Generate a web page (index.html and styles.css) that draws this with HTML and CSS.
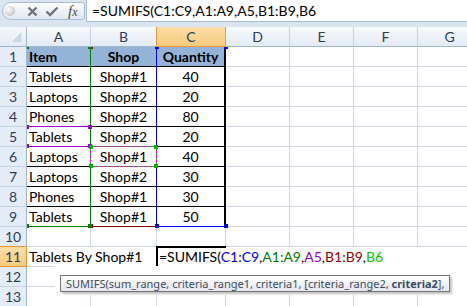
FILE: index.html
```html
<!DOCTYPE html>
<html lang="en">

<head>
    <meta charset="UTF-8">
    <title>SUMIFS</title>
    <link rel="stylesheet" href="styles.css">
</head>

<body>
    <div class="formulaBar">
        <div class="fxBox">
            <span class="knob"></span>
            <svg class="btnX" width="11" height="11" viewBox="0 0 11 11"><path d="M1.5 1.5L9.5 9.5M9.5 1.5L1.5 9.5"/></svg>
            <svg class="btnOk" width="14" height="11" viewBox="0 0 14 11"><path d="M1.5 5.5L5 9L12.5 1.5"/></svg>
            <span class="fx">f<i>x</i></span>
        </div>
        <div class="formulaInput">=SUMIFS(C1:C9,A1:A9,A5,B1:B9,B6</div>
    </div>
    <div class="band"></div>
    <div class="sheet">
        <div class="grid">
            <div class="corner"><svg width="26" height="19" viewBox="0 0 26 19"><polygon points="22,4 22,16 10,16"/></svg></div>
            <div class="ch">A</div><div class="ch pre">B</div><div class="ch sel">C</div><div class="ch">D</div><div class="ch">E</div><div class="ch">F</div><div class="ch">G</div>

            <div class="rh">1</div><div class="c t hd">Item</div><div class="c t hd m">Shop</div><div class="c t hd m q">Quantity</div><div class="c"></div><div class="c"></div><div class="c"></div><div class="c"></div>
            <div class="rh">2</div><div class="c t">Tablets</div><div class="c t m">Shop#1</div><div class="c t m q">40</div><div class="c"></div><div class="c"></div><div class="c"></div><div class="c"></div>
            <div class="rh">3</div><div class="c t">Laptops</div><div class="c t m">Shop#2</div><div class="c t m q">20</div><div class="c"></div><div class="c"></div><div class="c"></div><div class="c"></div>
            <div class="rh">4</div><div class="c t">Phones</div><div class="c t m">Shop#2</div><div class="c t m q">80</div><div class="c"></div><div class="c"></div><div class="c"></div><div class="c"></div>
            <div class="rh">5</div><div class="c t">Tablets</div><div class="c t m">Shop#2</div><div class="c t m q">20</div><div class="c"></div><div class="c"></div><div class="c"></div><div class="c"></div>
            <div class="rh">6</div><div class="c t">Laptops</div><div class="c t m">Shop#1</div><div class="c t m q">40</div><div class="c"></div><div class="c"></div><div class="c"></div><div class="c"></div>
            <div class="rh">7</div><div class="c t">Laptops</div><div class="c t m">Shop#2</div><div class="c t m q">30</div><div class="c"></div><div class="c"></div><div class="c"></div><div class="c"></div>
            <div class="rh">8</div><div class="c t">Phones</div><div class="c t m">Shop#1</div><div class="c t m q">30</div><div class="c"></div><div class="c"></div><div class="c"></div><div class="c"></div>
            <div class="rh">9</div><div class="c t">Tablets</div><div class="c t m">Shop#1</div><div class="c t m q">50</div><div class="c"></div><div class="c"></div><div class="c"></div><div class="c"></div>
            <div class="rh pre">10</div><div class="c"></div><div class="c"></div><div class="c"></div><div class="c"></div><div class="c"></div><div class="c"></div><div class="c"></div>
            <div class="rh sel">11</div><div class="c ov">Tablets By Shop#1</div><div class="c"></div><div class="c"></div><div class="c"></div><div class="c"></div><div class="c"></div><div class="c"></div>
            <div class="rh">12</div><div class="c"></div><div class="c"></div><div class="c"></div><div class="c"></div><div class="c"></div><div class="c"></div><div class="c"></div>
            <div class="rh">13</div><div class="c"></div><div class="c"></div><div class="c"></div><div class="c"></div><div class="c"></div><div class="c"></div><div class="c"></div>
        </div>

        <!-- range outlines, in-cell editor and tooltip drawn over the grid -->
        <div class="marks">
            <div class="rng rngB"><i class="tl"></i><i class="tr"></i><i class="bl"></i><i class="br"></i></div>
            <div class="rng rngA"><i class="tl"></i><i class="tr"></i><i class="bl"></i><i class="br"></i></div>
            <div class="rng rngC"><i class="tl"></i><i class="tr"></i><i class="bl"></i><i class="br"></i></div>
            <div class="rng rngA5"><i class="tl"></i><i class="tr"></i><i class="bl"></i><i class="br"></i></div>
            <div class="rng rngB6"><i class="tl"></i><i class="tr"></i><i class="bl"></i><i class="br"></i></div>
            <div class="editor"><span class="activeFrame"></span>=SUMIFS(<span class="refC">C1:C9</span>,<span class="refA">A1:A9</span>,<span class="refA5">A5</span>,<span class="refB">B1:B9</span>,<span class="refB6">B6</span></div>
            <div class="tipClear"></div>
            <div class="tip">SUMIFS(sum_range, criteria_range1, criteria1, [criteria_range2, <b>criteria2</b>], </div>
        </div>
    </div>
</body>

</html>
```

FILE: styles.css
```css
* {
    margin: 0;
    padding: 0;
    box-sizing: border-box;
}

body {
    width: 467px;
    height: 306px;
    overflow: hidden;
    background: #fff;
    font-family: Lato, "Liberation Sans", sans-serif;
    font-size: 14px;
    color: #000;
}

/* formula bar */
.formulaBar {
    display: flex;
    height: 22px;
    background: #dbe5f1;
}

.fxBox {
    display: flex;
    align-items: center;
    width: 83px;
    height: 18px;
    margin: 2px 0 0 2px;
    border: 1px solid #a7bcd6;
    border-radius: 9px 3px 3px 9px;
    background: linear-gradient(#fbfcfe, #e1e8f2);
}

.knob {
    width: 10px;
    height: 10px;
    margin-left: 2px;
    border-radius: 50%;
    background: radial-gradient(circle at 35% 35%, #fff, #cfcfcf 60%, #a9a9a9);
}

.btnX {
    margin-left: 12px;
}

.btnX path,
.btnOk path {
    fill: none;
    stroke: #707070;
    stroke-width: 2.3;
}

.btnOk {
    margin-left: 7px;
}

.fx {
    margin-left: 9px;
    font-family: "Liberation Serif", serif;
    font-style: italic;
    font-size: 15px;
    color: #4a4a4a;
}

.fx i {
    font-size: 12px;
}

.formulaInput {
    flex: 1;
    margin-left: 1px;
    padding-left: 5px;
    background: #fff;
    border-left: 1px solid #a7bcd6;
    border-bottom: 1px solid #a7bcd6;
    line-height: 21px;
    white-space: nowrap;
}

.band {
    height: 5px;
    background: #dbe5f1;
}

/* sheet */
.sheet {
    position: relative;
    height: 279px;
    overflow: hidden;
}

.grid {
    display: grid;
    grid-template-columns: 27px 64px 66px 69px 64px 64px 64px 64px;
    grid-auto-rows: 20px;
}

.corner {
    background: linear-gradient(#f6f8fb, #e2e9f3);
    border-right: 1px solid #9eb6ce;
    border-bottom: 1px solid #9eb6ce;
}

.corner polygon {
    fill: #cdd8e7;
    stroke: #f4f7fb;
    stroke-width: 1;
}

.ch {
    background: linear-gradient(#f7f9fc, #e3eaf4);
    border-right: 1px solid #c5d3e4;
    border-bottom: 1px solid #9eb6ce;
    text-align: center;
    line-height: 19px;
    color: #2b3f58;
}

.ch.pre {
    border-right-color: #f29536;
}

.ch.sel {
    background: linear-gradient(#fbdea6, #f6cb80);
    border-right-color: #f29536;
    border-bottom-color: #f29536;
}

.rh {
    background: #e4ecf7;
    border-right: 1px solid #9eb6ce;
    border-bottom: 1px solid #c5d3e4;
    text-align: center;
    line-height: 19px;
    color: #2b3f58;
}

.rh.pre {
    border-bottom-color: #f29536;
}

.rh.sel {
    background: linear-gradient(#fbdea6, #f6cb80);
    border-right-color: #f29536;
    border-bottom-color: #f29536;
}

.c {
    padding: 0 2px;
    border-right: 1px solid #d0d7e5;
    border-bottom: 1px solid #d0d7e5;
    line-height: 19px;
    white-space: nowrap;
}

.c.t {
    border-right-color: #000;
    border-bottom-color: #000;
}

.c.q {
    border-right: 2px solid #000;
}

.c.hd {
    background: #95b3d7;
    font-weight: bold;
}

.c.m {
    text-align: center;
}

.c.ov {
    border-right-color: transparent;
}

/* overlay layer, origin at top-left of A1 */
.marks {
    position: absolute;
    left: 27px;
    top: 20px;
    right: 0;
    bottom: 0;
    overflow: hidden;
}

.rng {
    position: absolute;
}

.rng i {
    position: absolute;
    width: 4px;
    height: 4px;
    background: currentColor;
}

.tl { left: -2px; top: -2px; }
.tr { right: -2px; top: -2px; }
.bl { left: -2px; bottom: -2px; }
.br { right: -2px; bottom: -2px; }

.rngB {
    left: 64px;
    top: 0;
    width: 66px;
    height: 180px;
    border-bottom: 1px solid;
    color: #800000;
}

.rngA {
    left: 0;
    top: 0;
    width: 64px;
    height: 180px;
    border-right: 1px solid;
    border-bottom: 1px solid;
    color: #008000;
}

.rngC {
    left: 129px;
    top: 0;
    width: 70px;
    height: 180px;
    border-left: 1px solid;
    border-bottom: 1px solid;
    color: #0000ff;
}

.rngA5 {
    left: 0;
    top: 79px;
    width: 63px;
    height: 21px;
    border-top: 1px solid;
    border-bottom: 1px solid;
    color: #9900cc;
}

.rngB6 {
    left: 63px;
    top: 99px;
    width: 67px;
    height: 21px;
    border: 1px solid #00c000;
    color: #00b000;
}

.rngB6::before {
    content: '';
    position: absolute;
    left: -1px;
    top: -1px;
    right: -1px;
    bottom: -1px;
    border: 1px dashed #ff00ff;
}

.editor {
    position: absolute;
    left: 129px;
    top: 200px;
    right: 0;
    height: 19px;
    padding-left: 3px;
    background: #fff;
    line-height: 19px;
    white-space: nowrap;
}

.activeFrame {
    position: absolute;
    left: 0;
    top: -1px;
    width: 70px;
    height: 21px;
    border-left: 2px solid #000;
    border-top: 2px solid #000;
}

.refC { color: #0000ff; }
.refA { color: #008000; }
.refA5 { color: #9900cc; }
.refB { color: #990000; }
.refB6 { color: #00cc00; }

.tipClear {
    position: absolute;
    left: 28px;
    top: 219px;
    right: 0;
    height: 29px;
    background: #fff;
}

.tip {
    position: absolute;
    left: 33px;
    top: 228px;
    width: 390px;
    height: 17px;
    padding-left: 5px;
    border: 1px solid #767676;
    background: linear-gradient(#ffffff, #e4e5f0);
    box-shadow: 2px 2px 2px rgba(0, 0, 0, 0.25);
    font-family: "Noto Sans", sans-serif;
    font-size: 11px;
    line-height: 15px;
    color: #3e4c61;
    white-space: nowrap;
    overflow: hidden;
}
```
